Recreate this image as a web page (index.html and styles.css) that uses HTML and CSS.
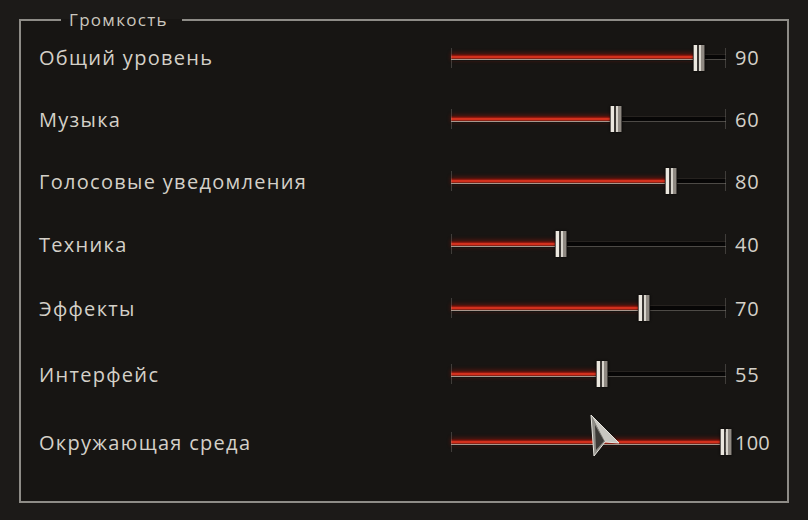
FILE: index.html
```html
<!DOCTYPE html>
<html lang="ru">
<head>
    <meta charset="UTF-8">
    <meta name="viewport" content="width=device-width, initial-scale=1.0">
    <title>Громкость</title>
    <link rel="stylesheet" href="styles.css">
</head>
<body>
    <fieldset class="volume">
        <legend>Громкость</legend>
        <div class="rows">
            <div class="label">Общий уровень</div>
            <div class="slider"><div class="groove"><div class="fill" style="width: 90%"></div></div><div class="thumb" style="left: 90%"></div></div>
            <div class="value">90</div>

            <div class="label">Музыка</div>
            <div class="slider"><div class="groove"><div class="fill" style="width: 60%"></div></div><div class="thumb" style="left: 60%"></div></div>
            <div class="value">60</div>

            <div class="label">Голосовые уведомления</div>
            <div class="slider"><div class="groove"><div class="fill" style="width: 80%"></div></div><div class="thumb" style="left: 80%"></div></div>
            <div class="value">80</div>

            <div class="label">Техника</div>
            <div class="slider"><div class="groove"><div class="fill" style="width: 40%"></div></div><div class="thumb" style="left: 40%"></div></div>
            <div class="value">40</div>

            <div class="label">Эффекты</div>
            <div class="slider"><div class="groove"><div class="fill" style="width: 70%"></div></div><div class="thumb" style="left: 70%"></div></div>
            <div class="value">70</div>

            <div class="label">Интерфейс</div>
            <div class="slider"><div class="groove"><div class="fill" style="width: 55%"></div></div><div class="thumb" style="left: 55%"></div></div>
            <div class="value">55</div>

            <div class="label">Окружающая среда</div>
            <div class="slider"><div class="groove"><div class="fill" style="width: 100%"></div></div><div class="thumb" style="left: 100%"></div></div>
            <div class="value value-wide">100</div>
        </div>
    </fieldset>

    <!-- game mouse pointer -->
    <svg class="pointer" width="32" height="44" viewBox="0 0 32 44">
        <polygon points="2,1 30,29 16,28 5,42" fill="#5a5854"/>
        <polygon points="2,1 30,29 16,28" fill="#c9c7c1"/>
        <polygon points="2,1 16,28 5,42" fill="#8e8c86"/>
        <polygon points="6,11 15,27 7,36" fill="#3c3a37"/>
        <polyline points="2,1 30,29 16,28 5,42 2,1" fill="none" stroke="#e6e4de" stroke-width="1"/>
    </svg>
</body>
</html>
```

FILE: styles.css
```css
body{
    margin: 0;
    padding: 0 19px;
    background-color: #1c1a18;
    font-family: "Open Sans", "DejaVu Sans", sans-serif;
    color: #d4d0c8;
    position: relative;
}

.volume{
    margin: 13px 0 0 0;
    padding: 0 0 25px 18px;
    border: 2px solid #8e8c87;
    background-color: #171513;
}

.volume legend{
    margin-left: 22px;
    padding: 0 14px 0 8px;
    font-size: 17px;
    line-height: 14px;
    color: #cbc7bf;
    letter-spacing: 1.3px;
}

.rows{
    display: grid;
    grid-template-columns: 403px 275px auto;
    grid-template-rows: 61px 62px 62px 64px 64px 68px 68px;
    column-gap: 9px;
    align-items: center;
}

.label{
    font-size: 20px;
    letter-spacing: 1.3px;
}

.value{
    font-size: 20px;
    letter-spacing: 0.8px;
}
.value-wide{
    letter-spacing: 0.2px;
}

.slider{
    position: relative;
    height: 26px;
    display: flex;
    align-items: center;
}
/* faint tick marks on both ends */
.slider::before,
.slider::after{
    content: "";
    position: absolute;
    top: 3px;
    width: 1px;
    height: 20px;
    background-color: rgba(160, 155, 148, .3);
}
.slider::before{
    left: 0;
}
.slider::after{
    right: 0;
}

.groove{
    width: 100%;
    height: 7px;
    background: linear-gradient(#26221f 0 1px, #070606 1px 5px, #4d4a46 5px 6px, transparent 6px);
}

.fill{
    height: 100%;
    background: linear-gradient(#5e120b 0 1px, #8a1a10 1px 2px, #d3301d 2px 4px, #8a2216 4px 5px, #a8968c 5px 6px, transparent 6px);
    box-shadow: 0 -1px 4px rgba(170, 25, 10, .45);
}

.thumb{
    position: absolute;
    top: 0;
    width: 12px;
    height: 26px;
    transform: translateX(-50%);
    background: linear-gradient(to right,
        #5e5955 0 1px,
        #ebe7df 1px 4px,
        #3a3633 4px 6px,
        #d9d5cd 6px 8px,
        #8f8982 8px 11px,
        #4a4642 11px 12px);
    box-shadow: 0 0 2px rgba(0, 0, 0, .8);
}

.pointer{
    position: absolute;
    left: 589px;
    top: 414px;
}
```
